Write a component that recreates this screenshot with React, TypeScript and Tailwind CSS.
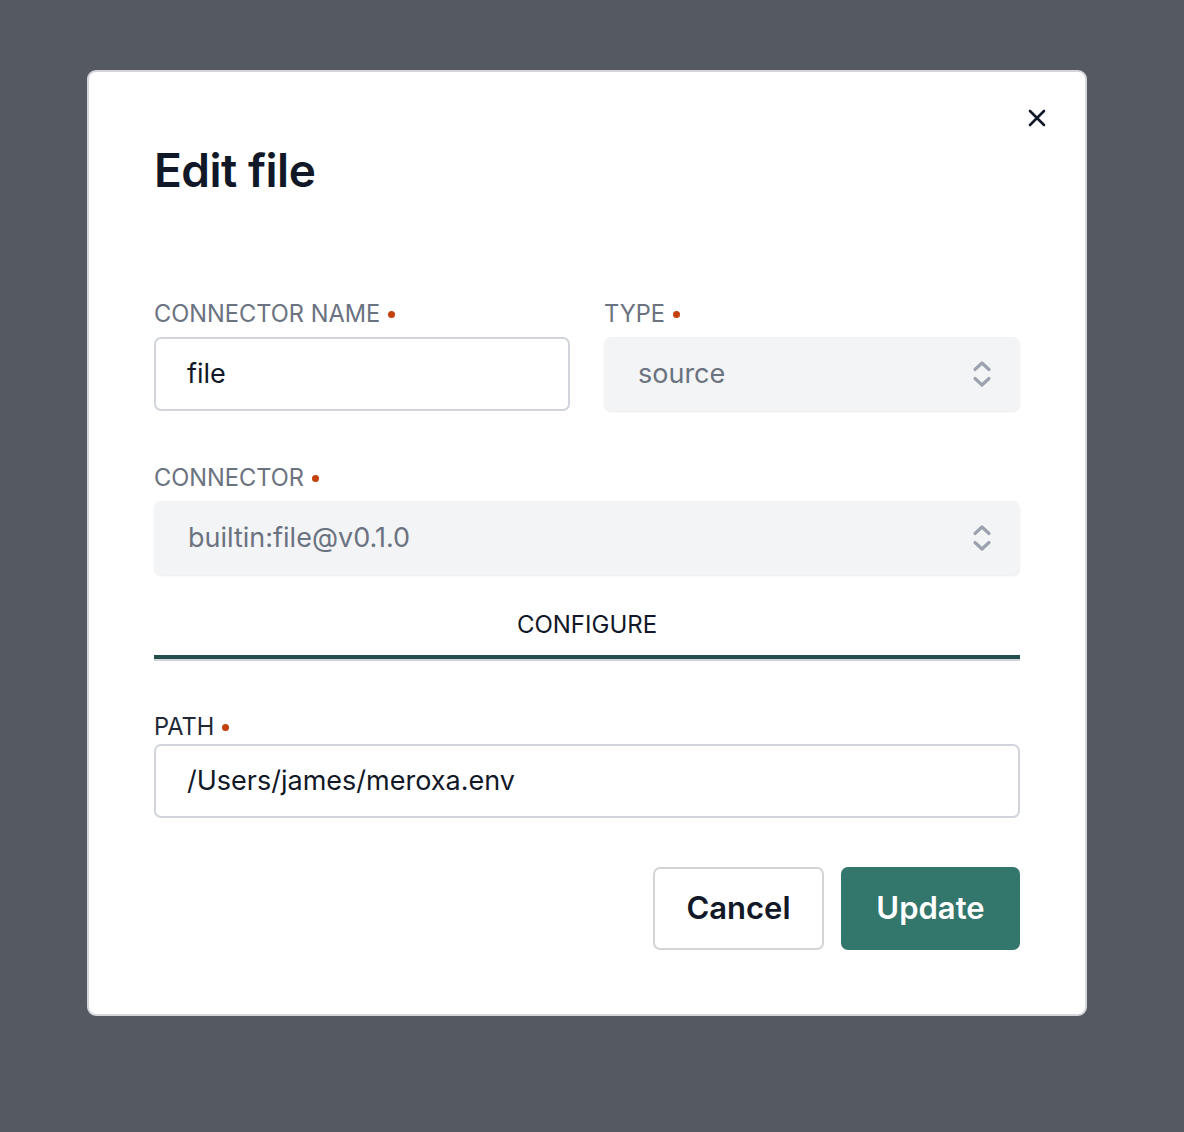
import React from "react";

function Dot() {
  return <span className="ml-[8px] inline-block h-[7px] w-[7px] rounded-full bg-[#c2410c] align-middle" />;
}

function Label({ children, dark }: { children: React.ReactNode; dark?: boolean }) {
  return (
    <div
      className={`flex items-center text-[23.6px] leading-[28px] ${dark ? "text-[#1f2937]" : "text-[#6b7280]"}`}
    >
      <span>{children}</span>
      <Dot />
    </div>
  );
}

function UpDown() {
  return (
    <svg width="20" height="28" viewBox="0 0 20 28" fill="none" stroke="#9ca3af" strokeWidth="3.2" strokeLinecap="round" strokeLinejoin="round">
      <path d="M3 9.5 L10 3 L17 9.5" />
      <path d="M3 18.5 L10 25 L17 18.5" />
    </svg>
  );
}

function SelectBox({ value }: { value: string }) {
  return (
    <div className="mt-[9px] flex h-[74px] items-center justify-between rounded-[7px] bg-[#f3f4f6] pl-[34px] pr-[28px] text-[27px] text-[#6b7280] shadow-[0_1px_2px_rgba(0,0,0,0.08)]">
      <span>{value}</span>
      <UpDown />
    </div>
  );
}

function TextBox({ value }: { value: string }) {
  return (
    <div className="mt-[9px] flex h-[74px] items-center rounded-[7px] border-2 border-[#d1d5db] bg-white pl-[31px] text-[27px] text-[#111827]">
      {value}
    </div>
  );
}

export default function App() {
  return (
    <div className="min-h-[1132px] w-full bg-[#555962] pt-[70px] font-['Inter','Liberation_Sans',sans-serif]">
      <div className="relative ml-[87px] w-[1000px] rounded-[9px] border-2 border-[#d4d6da] bg-white px-[65px] pb-[64px] pt-[74px]">
        <button className="absolute right-[38px] top-[36px] text-[#111827]">
          <svg width="20" height="20" viewBox="0 0 20 20" fill="none" stroke="currentColor" strokeWidth="2.6" strokeLinecap="round">
            <path d="M3 3 L17 17 M17 3 L3 17" />
          </svg>
        </button>

        <h1 className="text-[46px] font-semibold leading-[48px] tracking-[-0.5px] text-[#111827]">Edit file</h1>

        <div className="mt-[106px] grid grid-cols-2 gap-x-[34px]">
          <div>
            <Label>CONNECTOR NAME</Label>
            <TextBox value="file" />
          </div>
          <div>
            <Label>TYPE</Label>
            <SelectBox value="source" />
          </div>
        </div>

        <div className="mt-[53px]">
          <Label>CONNECTOR</Label>
          <SelectBox value="builtin:file@v0.1.0" />
        </div>

        <div className="mt-[36px] flex flex-col items-center">
          <div className="text-[24px] leading-[28px] text-[#111827]">CONFIGURE</div>
          <div className="mt-[16px] h-[4px] w-full bg-[#234e4a]" />
          <div className="h-[2px] w-full bg-[#d1d5db]" />
        </div>

        <div className="mt-[52px]">
          <Label dark>PATH</Label>
          <div className="-mt-[6px]">
            <TextBox value="/Users/james/meroxa.env" />
          </div>
        </div>

        <div className="mt-[49px] flex justify-end gap-[17px]">
          <button className="h-[83px] w-[171px] rounded-[7px] border-2 border-[#d4d4d4] bg-white text-[31px] font-semibold text-[#111827]">
            Cancel
          </button>
          <button className="h-[83px] w-[179px] rounded-[7px] bg-[#33766c] text-[31px] font-semibold text-white">
            Update
          </button>
        </div>
      </div>
    </div>
  );
}
